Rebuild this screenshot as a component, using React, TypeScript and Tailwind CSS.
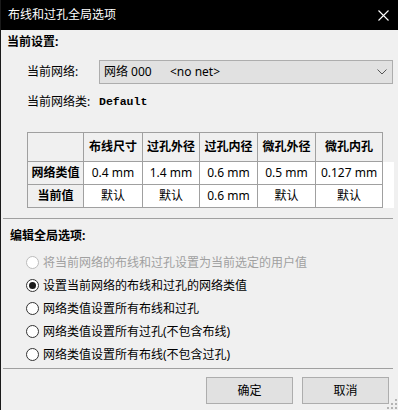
const FONT = '"Noto Sans", "Noto Sans CJK SC", sans-serif';

const HEADERS = ['布线尺寸', '过孔外径', '过孔内径', '微孔外径', '微孔内孔'];
const WIDTHS = ['w-[59px]', 'w-[57px]', 'w-[58px]', 'w-[58px]', 'w-[67px]'];

const ROWS = [
    { label: '网络类值', values: ['0.4 mm', '1.4 mm', '0.6 mm', '0.5 mm', '0.127 mm'] },
    { label: '当前值', values: ['默认', '默认', '0.6 mm', '默认', '默认'] },
];

const OPTIONS = [
    { text: '将当前网络的布线和过孔设置为当前选定的用户值', disabled: true, checked: false },
    { text: '设置当前网络的布线和过孔的网络类值', disabled: false, checked: true },
    { text: '网络类值设置所有布线和过孔', disabled: false, checked: false },
    { text: '网络类值设置所有过孔(不包含布线)', disabled: false, checked: false },
    { text: '网络类值设置所有布线(不包含过孔)', disabled: false, checked: false },
];

function Radio({ checked, disabled }: { checked: boolean; disabled: boolean }) {
    return (
        <div
            className={`w-[13px] h-[13px] rounded-full border bg-white flex items-center justify-center shrink-0 ${
                disabled ? 'border-[#bcbcbc]' : 'border-[#333333]'
            }`}
        >
            {checked && <div className="w-[7px] h-[7px] rounded-full bg-[#1a1a1a]" />}
        </div>
    );
}

export default function App() {
    return (
        <div
            className="w-[398px] h-[410px] bg-[#f0f0f0] border-l border-[#1a1a1a] flex flex-col text-[12px] text-black relative overflow-hidden"
            style={{ fontFamily: FONT }}
        >
            {/* title bar */}
            <div className="h-[30px] bg-black flex items-center justify-between pl-[7px] pr-[9px] text-white shrink-0">
                <span className="leading-[16px]">布线和过孔全局选项</span>
                <svg width="11" height="11" viewBox="0 0 11 11">
                    <path d="M0.5 0.5 L10.5 10.5 M10.5 0.5 L0.5 10.5" stroke="#ffffff" strokeWidth="1.1" />
                </svg>
            </div>

            {/* current settings */}
            <div className="h-[24px] flex items-center pl-[6px] font-bold leading-[16px]">当前设置:</div>

            <div className="mt-[6px] h-[24px] flex items-center">
                <span className="w-[98px] pl-[26px] leading-[16px]">当前网络:</span>
                <div className="w-[294px] h-[24px] bg-[#e1e1e1] border border-[#adadad] flex items-center pl-[4px] pr-[3px]">
                    <span className="leading-[16px] w-[66px]">网络 000</span>
                    <span className="leading-[16px] flex-1">&lt;no net&gt;</span>
                    <svg width="10" height="6" viewBox="0 0 10 6" className="mr-[2px]">
                        <path d="M0.5 0.5 L5 5 L9.5 0.5" stroke="#555555" strokeWidth="1" fill="none" />
                    </svg>
                </div>
            </div>

            <div className="mt-[7px] h-[22px] flex items-center">
                <span className="w-[98px] pl-[26px] leading-[16px]">当前网络类:</span>
                <span className="font-bold text-[11.5px] leading-[16px]" style={{ fontFamily: '"Liberation Mono", monospace' }}>
                    Default
                </span>
            </div>

            {/* table */}
            <div className="mt-[19px] ml-[26px] flex flex-col">
                <div className="flex">
                    <div className="flex border-l border-t border-[#a0a0a0]">
                        <div className="w-[56px] h-[29px] border-r border-b border-[#a0a0a0]" />
                        {HEADERS.map((h, i) => (
                            <div
                                key={h}
                                className={`${WIDTHS[i]} h-[29px] border-r border-b border-[#a0a0a0] flex items-center justify-center font-bold leading-[16px]`}
                            >
                                {h}
                            </div>
                        ))}
                    </div>
                </div>
                {ROWS.map((row) => (
                    <div key={row.label} className="flex">
                        <div className="flex border-l border-[#a0a0a0]">
                            <div className="w-[56px] h-[23px] border-r border-b border-[#a0a0a0] flex items-center justify-center font-bold leading-[16px]">
                                {row.label}
                            </div>
                            {row.values.map((v, i) => (
                                <div
                                    key={i}
                                    className={`${WIDTHS[i]} h-[23px] border-r border-b border-[#a0a0a0] bg-white flex items-center justify-center leading-[16px]`}
                                >
                                    {v}
                                </div>
                            ))}
                        </div>
                        <div className="w-[11px] h-[23px] bg-white" />
                    </div>
                ))}
            </div>

            <div className="mt-[10px] ml-[2px] mr-[5px] h-px bg-[#a0a0a0]" />

            {/* edit options */}
            <div className="mt-[5px] h-[24px] flex items-center pl-[9px] font-bold leading-[16px]">编辑全局选项:</div>

            <div className="mt-[3px] flex flex-col pl-[25px]">
                {OPTIONS.map((o) => (
                    <div key={o.text} className="h-[23px] flex items-center gap-[4px]">
                        <Radio checked={o.checked} disabled={o.disabled} />
                        <span className={`leading-[16px] ${o.disabled ? 'text-[#a0a0a0]' : ''}`}>{o.text}</span>
                    </div>
                ))}
            </div>

            <div className="mt-[2px] ml-[2px] mr-[5px] h-px bg-[#a0a0a0]" />

            <div className="mt-[8px] flex justify-end gap-[9px] pr-[9px]">
                <button className="w-[87px] h-[27px] bg-[#e1e1e1] border border-[#adadad] leading-[16px]">确定</button>
                <button className="w-[87px] h-[27px] bg-[#e1e1e1] border border-[#adadad] leading-[16px]">取消</button>
            </div>

            {/* resize grip */}
            <svg width="12" height="12" viewBox="0 0 12 12" className="absolute right-0 bottom-0">
                <rect x="9" y="1" width="2" height="2" fill="#b4b4b4" />
                <rect x="5" y="5" width="2" height="2" fill="#b4b4b4" />
                <rect x="9" y="5" width="2" height="2" fill="#b4b4b4" />
                <rect x="1" y="9" width="2" height="2" fill="#b4b4b4" />
                <rect x="5" y="9" width="2" height="2" fill="#b4b4b4" />
                <rect x="9" y="9" width="2" height="2" fill="#b4b4b4" />
            </svg>
        </div>
    );
}
